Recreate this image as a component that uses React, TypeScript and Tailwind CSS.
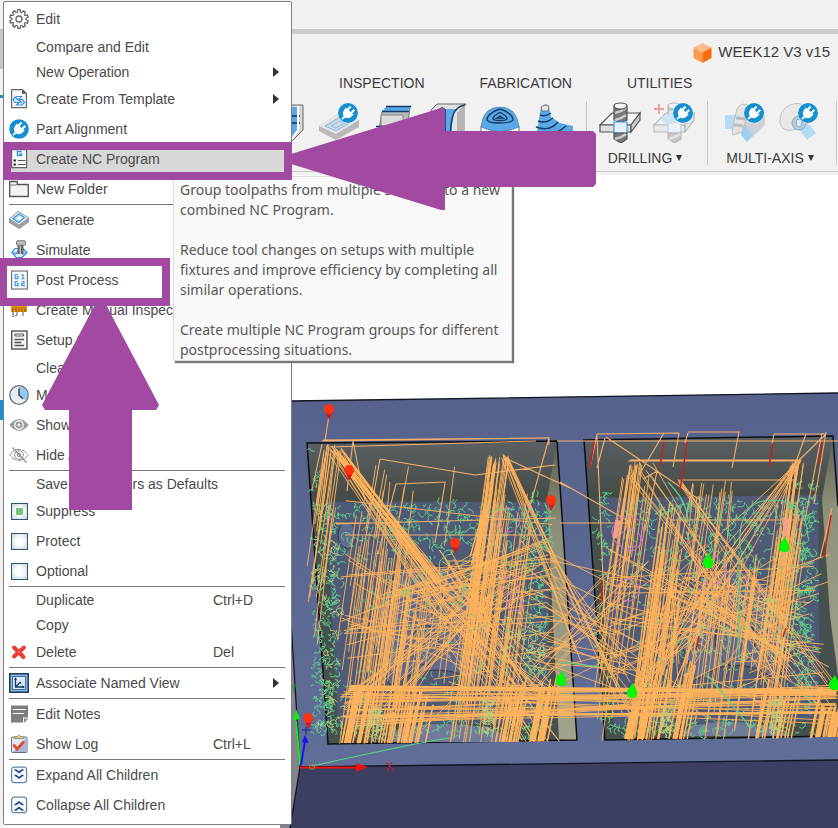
import type { ReactNode } from 'react';

type MenuEntry = {
    label?: string;
    icon?: ReactNode;
    shortcut?: string;
    submenu?: boolean;
    checkbox?: boolean;
    checked?: boolean;
    active?: boolean;
    separator?: boolean;
};

/* ---------- menu icons (20 x 20) ---------- */

const Icon = ({ children }: { children: ReactNode }) => (
    <svg viewBox="0 0 20 20" className="w-5 h-5" aria-hidden="true">
        {children}
    </svg>
);

// white plug centred on the origin, cord to the lower left
const Plug = () => (
    <g transform="rotate(42)" fill="#fff">
        <path d="M-5.2-2.600h10.400v1.400q0 5.400-4.200 6.200v1.200h-2v-1.200q-4.200-.8-4.200-6.200z" />
        <path d="M-3.500-6.600h2.100v4.600h-2.100zM1.400-6.600h2.100v4.600h-2.100z" />
        <path d="M0 4q0 2.500-.5 4.600" fill="none" stroke="#fff" strokeWidth="1.800" />
    </g>
);

const gearTeeth = Array.from({ length: 10 }, (_, i) => i * 36);

const GearIcon = () => (
    <Icon>
        <g fill="#fff" stroke="#666" strokeWidth="1.3">
            {gearTeeth.map((a) => (
                <path key={a} d="M8.4 3.4L8.8 .7h2.4l.4 2.7" transform={`rotate(${a} 10 10)`} />
            ))}
            <circle cx="10" cy="10" r="6.6" stroke="none" />
            {gearTeeth.map((a) => (
                <path key={a} d="M11.6 3.4q1 .2 1.3.4" fill="none" transform={`rotate(${a} 10 10)`} />
            ))}
            <circle cx="10" cy="10" r="3" />
        </g>
    </Icon>
);

const TemplateIcon = () => (
    <Icon>
        <path d="M2.6.6h10.8l4 4v14H2.6z" fill="#f7f7f7" stroke="#666" strokeWidth="1.2" />
        <path d="M13 .6v4.2h4.4z" fill="#555" />
        <path d="M4 10.500l3-3h5.500l-2.500 3h3.500l2 3-2.500 2.500H7.500l2.500-2.500H6zM7 9l6 5" fill="#d5eafb" stroke="#2f8fe0" strokeWidth="1.100" />
    </Icon>
);

const PlugIcon = () => (
    <Icon>
        <circle cx="10" cy="10" r="9.800" fill="#1490d2" />
        <g transform="translate(10 10)">
            <Plug />
        </g>
    </Icon>
);

const NcIcon = () => (
    <Icon>
        <path d="M2.600.6h15v18h-15z" fill="#f7f7f7" stroke="#666" strokeWidth="1.200" />
        <path d="M12.500 2.500H8.500v4h4V5h-2" fill="none" stroke="#3f97dc" strokeWidth="1.600" />
        <path d="M4.500 11.500h2.500M4.500 15.500h2.500" stroke="#333" strokeWidth="2" />
        <path d="M9 11.500h7.500M9 15.500h7.500" stroke="#555" strokeWidth="1.200" />
    </Icon>
);

const FolderIcon = () => (
    <Icon>
        <path d="M.7 17.500v-15h7.600v3h11v12z" fill="#f3f3f3" stroke="#555" strokeWidth="1.300" />
        <path d="M.7 6h6.500l1-1.500" fill="none" stroke="#777" />
    </Icon>
);

const GenerateIcon = () => (
    <Icon>
        <path d="M.5 9L9 1.500l10.500 6.500v4L10 18.500.5 12.500z" fill="#9aa1a8" stroke="#777" strokeWidth=".7" />
        <path d="M.5 9L9 1.500l10.500 6.500L10 15z" fill="#e9edf1" stroke="#888" strokeWidth=".6" />
        <path d="M4 8.500L10 4l5.500 3.500-6 5z" fill="#b9dcf8" stroke="#3b8fdc" strokeWidth="1.100" />
        <path d="M6.500 7l3 .5L10.500 5l3 3-4 2.500z" fill="#eef7ff" />
    </Icon>
);

const SimulateIcon = () => (
    <Icon>
        <path d="M3 12.500L6 8.500h8l4 4-5 5H7z" fill="#dff0ff" stroke="#2f8fe0" strokeWidth="1.200" />
        <path d="M2.500 13h15M5 16l5-6 5 6" fill="none" stroke="#2f8fe0" />
        <path d="M8.500 5h6v9h-6z" fill="#666" />
        <path d="M10.500 5h1.500v9h-1.500z" fill="#bbb" />
        <rect x="7.500" y=".7" width="9" height="4.600" rx="1" fill="#b9b9b9" stroke="#666" strokeWidth=".8" />
    </Icon>
);

const PostIcon = () => (
    <Icon>
        <rect x="2.600" y="1" width="15.800" height="18" fill="#f8f8f8" stroke="#777" strokeWidth="1.200" />
        <g fill="none" stroke="#48a0e6" strokeWidth="1.300">
            <path d="M9 4.700H6.200v4H9v-2H7.800M12.500 4.700h1.500v4M12.500 8.700h3M9 11.700H6.200v4H9v-2H7.800M12.500 11.700h2.500v2h-2.500v2H16" />
        </g>
    </Icon>
);

const InspectIcon = () => (
    <Icon>
        <path d="M2 4h16v8H2z" fill="#e8920c" />
        <path d="M4 8v4M7 7v5M10 8v4M13 7v5M16 8v4" stroke="#8a5200" />
        <path d="M4 12v5M8 12v3l-2 1M14 12v4" stroke="#555" fill="none" />
    </Icon>
);

const SheetIcon = () => (
    <Icon>
        <rect x="2.700" y="1" width="15.300" height="18" fill="#f5f5f5" stroke="#555" strokeWidth="1.400" />
        <path d="M6 4h8.500v2H6z" fill="#fff" stroke="#555" />
        <path d="M5.500 9.500h9.500M5.500 12.500h7M5.500 15.500h9.500" stroke="#555" strokeWidth="1.300" />
    </Icon>
);

const ClockIcon = () => (
    <Icon>
        <circle cx="10" cy="10" r="9.300" fill="#e9eef3" stroke="#6b7075" strokeWidth="1.300" />
        <path d="M10 10V1.800a8.200 8.200 0 0 1 6.500 13.200z" fill="#8ccaf8" />
        <path d="M10 3.500V10l4 4" fill="none" stroke="#444" strokeWidth="1.500" />
    </Icon>
);

const EyeIcon = () => (
    <Icon>
        <path d="M.3 10Q10-2 19.700 10 10 21.500.3 10z" fill="#9b9b9b" />
        <circle cx="10" cy="10" r="4.200" fill="#9b9b9b" stroke="#f4f4f4" strokeWidth="1.500" />
        <circle cx="10" cy="10" r="1.600" fill="#eee" />
    </Icon>
);

const EyeOffIcon = () => (
    <Icon>
        <g fill="none" stroke="#8c8c8c">
            <path d="M.6 10Q10-1.500 19.400 10 10 21 .6 10z" strokeDasharray="6 1.200" />
            <circle cx="10" cy="10" r="4.300" />
            <circle cx="10" cy="10" r="1.800" />
            <path d="M3.500 2.500l14 15" strokeWidth="1.200" />
        </g>
    </Icon>
);

const DeleteIcon = () => (
    <Icon>
        <path d="M5 5.500l9.500 9.500M15 5.500L5 14.500" stroke="#f03a36" strokeWidth="4" strokeLinecap="round" />
        <path d="M10 8.500l1.500 1.500-1.500 1.500L8.500 10z" fill="#f97a70" />
    </Icon>
);

const NamedViewIcon = () => (
    <Icon>
        <rect x=".8" y=".8" width="18.400" height="18.400" fill="#8eb8dc" stroke="#1f3f66" strokeWidth="1.600" />
        <rect x="3.500" y="3.500" width="13" height="13" fill="#d8e9f7" stroke="#3e6f9f" />
        <path d="M6.500 5v9h8.500M6.500 14l4.500-4.500 1 1" fill="none" stroke="#143a66" strokeWidth="1.300" />
        <path d="M5 6.800l1.500-2.500L8 6.800zM13.500 12.500l2.500 1.500-2.500 1.500z" fill="#143a66" />
    </Icon>
);

const NotesIcon = () => (
    <Icon>
        <path d="M2 1.500h17v12h-5v5H2z" fill="#7d7d7d" />
        <path d="M15 19v-4.500h4.500z" fill="#8b8b8b" />
        <path d="M4 5.500h13M4 9.500h11" stroke="#fff" strokeWidth="1.200" />
    </Icon>
);

const LogIcon = () => (
    <Icon>
        <rect x="2.500" y="3" width="15.500" height="15.500" rx="1" fill="#dfe7f2" stroke="#5a6f94" />
        <path d="M17.500 4v14H4z" fill="#a9b9d6" />
        <path d="M5 4.500l1-2h2.500Q10-.5 11.800 2.500h2l1 2z" fill="#d8cf96" stroke="#8f8446" strokeWidth=".8" />
        <path d="M4.500 10.500l3.500 4.500 7-7.500" fill="none" stroke="#e2492d" strokeWidth="2.800" />
    </Icon>
);

const ChevronBoxIcon = ({ up }: { up?: boolean }) => (
    <Icon>
        <rect x="2.600" y="2.100" width="15" height="15.500" rx="2.500" fill="#f4f9ff" stroke="#6485a8" strokeWidth="1.200" />
        <g transform={up ? 'rotate(180 10 10)' : undefined} fill="none" stroke="#2c4780" strokeWidth="1.700">
            <path d="M5.500 5H7l3 2.500L13 5h1.500M5.500 10.500H7l3 2.500 3-2.500h1.500" />
        </g>
    </Icon>
);

const menu: MenuEntry[] = [
    { label: 'Edit', icon: <GearIcon /> },
    { label: 'Compare and Edit' },
    { label: 'New Operation', submenu: true },
    { label: 'Create From Template', icon: <TemplateIcon />, submenu: true },
    { label: 'Part Alignment', icon: <PlugIcon /> },
    { label: 'Create NC Program', icon: <NcIcon />, active: true },
    { label: 'New Folder', icon: <FolderIcon /> },
    { separator: true },
    { label: 'Generate', icon: <GenerateIcon /> },
    { label: 'Simulate', icon: <SimulateIcon /> },
    { label: 'Post Process', icon: <PostIcon /> },
    { label: 'Create Manual Inspection', icon: <InspectIcon /> },
    { label: 'Setup Sheet', icon: <SheetIcon /> },
    { label: 'Clear Toolpath' },
    { label: 'Machining Time', icon: <ClockIcon /> },
    { label: 'Show Toolpath', icon: <EyeIcon /> },
    { label: 'Hide All', icon: <EyeOffIcon /> },
    { separator: true },
    { label: 'Save Parameters as Defaults' },
    { label: 'Suppress', checkbox: true, checked: true },
    { label: 'Protect', checkbox: true },
    { label: 'Optional', checkbox: true },
    { separator: true },
    { label: 'Duplicate', shortcut: 'Ctrl+D' },
    { label: 'Copy' },
    { label: 'Delete', icon: <DeleteIcon />, shortcut: 'Del' },
    { separator: true },
    { label: 'Associate Named View', icon: <NamedViewIcon />, submenu: true },
    { separator: true },
    { label: 'Edit Notes', icon: <NotesIcon /> },
    { label: 'Show Log', icon: <LogIcon />, shortcut: 'Ctrl+L' },
    { separator: true },
    { label: 'Expand All Children', icon: <ChevronBoxIcon /> },
    { label: 'Collapse All Children', icon: <ChevronBoxIcon up /> },
];

function MenuRow({ item }: { item: MenuEntry }) {
    if (item.separator) return <hr className="ml-[5px] mr-[6px] border-0 h-px bg-[#777]" />;

    if (item.checkbox) {
        return (
            <label className="flex items-center h-[30px] pl-[5px] gap-[7px]">
                <span className="flex justify-center w-5">
                    <input
                        type="checkbox"
                        defaultChecked={item.checked}
                        className="appearance-none w-[17px] h-[17px] border border-[#2d5578] bg-[radial-gradient(circle,#ffffff_35%,#c6d2da)] checked:bg-[linear-gradient(#78c678,#78c678),radial-gradient(circle,#ffffff_35%,#c6d2da)] checked:bg-[length:7px_7px,100%_100%] checked:bg-center checked:bg-no-repeat"
                    />
                </span>
                {item.label}
            </label>
        );
    }

    return (
        <button
            type="button"
            role="menuitem"
            className={`flex items-center w-full pl-[5px] gap-[7px] text-left whitespace-nowrap ${item.icon ? 'h-[30px]' : 'h-[25px]'} ${item.active ? 'bg-[#d7d7d7]' : ''}`}
        >
            <span className="w-5 shrink-0">{item.icon}</span>
            <span>{item.label}</span>
            {item.shortcut && <span className="ml-auto w-[78px]">{item.shortcut}</span>}
            {item.submenu && (
                <svg viewBox="0 0 6 10" className="ml-auto mr-3 w-[6px] h-[10px]" aria-hidden="true">
                    <path d="M0 0l6 5-6 5z" fill="#333" />
                </svg>
            )}
        </button>
    );
}

/* ---------- toolbar icons (42 x 42) ---------- */

const ToolIcon = ({ label, children }: { label: string; children: ReactNode }) => (
    <button type="button" aria-label={label} className="w-[42px] h-[42px]">
        <svg viewBox="0 0 42 42" className="w-full h-full">
            {children}
        </svg>
    </button>
);

const PlugBadge = () => (
    <g transform="translate(30 12)">
        <circle r="10.500" fill="#fff" opacity=".7" />
        <circle r="10" fill="#1490d2" />
        <Plug />
    </g>
);

const PocketTool = () => (
    <ToolIcon label="Pocket">
        <path d="M4 4h35v25l-11 11H4z" fill="#d6d6d6" stroke="#666" />
        <path d="M6 6h29v22l-8 8H6z" fill="#5aa9e6" />
        <path d="M6 15h30M6 22h30" stroke="#0e2f55" strokeWidth="1.500" />
        <path d="M34 5v24l-6 9" fill="none" stroke="#fff" strokeWidth="2" />
    </ToolIcon>
);

const ProbeTool = () => (
    <ToolIcon label="Inspect surface">
        <path d="M1 25l22-14 18 8v7L18 39 1 30z" fill="#b9b9b9" />
        <path d="M1 25l22-14 18 8-23 14z" fill="#e4e6e8" />
        <path d="M7 25l15-9 11 5-15 9z" fill="#c5dbea" stroke="#92b4cc" />
        <path d="M13 25l9-5 5 2-9 5z" fill="none" stroke="#9dbccf" />
        <PlugBadge />
    </ToolIcon>
);

const FaceTool = () => (
    <ToolIcon label="Measure">
        <path d="M10 11l5-5h23l-3 23-9 5H6z" fill="#b8b8b8" stroke="#777" />
        <path d="M9 14h22v11H9z" fill="#dcdcdc" stroke="#888" />
        <path d="M10 10l5-5h25l-5 5z" fill="#5aa9e6" />
        <path d="M14 5.500h25M10 10.500h27M4 25.500h26M1 29h29" stroke="#153c66" strokeWidth="1.700" />
        <path d="M3 27h28v9H0z" fill="#5aa9e6" />
    </ToolIcon>
);

const SwarfTool = () => (
    <ToolIcon label="Surface">
        <path d="M5 9l6-6h29l-8 9v27H5z" fill="#e2e2e2" stroke="#666" />
        <path d="M31 12l8-8v25l-8 9z" fill="#b6b6b6" />
        <path d="M14 8h16q-4 6-5 30H9Q15 15 14 8z" fill="#5aa9e6" />
        <path d="M24 38q1-25 6-29 3-4 9-5M13 9q3-4 6 0v25" fill="none" stroke="#153c66" strokeWidth="1.600" />
    </ToolIcon>
);

const DomeTool = () => (
    <ToolIcon label="Additive dome">
        <path d="M1 25v5q19 13 38 0v-5z" fill="#fff" stroke="#666" />
        <path d="M1 26Q3 6 20 6t19 20q-19 9-38 0z" fill="#5aa9e6" stroke="#4179a8" strokeWidth=".6" />
        <path d="M7 18Q8 13 17 9q3-1.500 6 0 9 4 10 9 0 4-13 4T7 18zM13 17q2-3 5.500-5 1.500-1 3 0 3.500 2 5.500 5 1 2.500-7 2.500t-7-2.500zM17 17l3-2 3 2z" fill="none" stroke="#153c66" strokeWidth="1.400" />
    </ToolIcon>
);

const ConeTool = () => (
    <ToolIcon label="Additive part">
        <path d="M7 6l5-3 3 3 2 10 9 6 13 3v12H2z" fill="#5aa9e6" />
        <path d="M7 6l4-2 4 1-1 5H8z" fill="#e5e5e5" stroke="#777" />
        <path d="M6 14q5 2 11-2M4 20q8 3 15-3M2 26q14 5 22-5M2 32q18 4 30-7" fill="none" stroke="#153c66" strokeWidth="1.500" />
    </ToolIcon>
);

const Drill = () => (
    <g stroke="#555" strokeWidth="1.200">
        <path d="M1 24l12-12h28l-9 12z" fill="#f7f7f7" />
        <path d="M1 24h31v7H1z" fill="#dedede" />
        <path d="M32 24l9-12v7l-9 12z" fill="#c9c9c9" />
        <path d="M15 5v14q6.500 4 13 0V5z" fill="#777" />
        <path d="M16 12q6-1 11-5M16 19q6-1 11-5" fill="none" stroke="#ccc" strokeWidth="2.500" />
        <ellipse cx="21.500" cy="5" rx="6.500" ry="3" fill="#f3f3f3" />
        <path d="M15 21h13v11H15z" fill="#e2f1fc" stroke="#3b9be6" />
        <path d="M15 32h13v6l-6 4-7-4z" fill="#777" />
        <path d="M16 38q6-1 11-5" fill="none" stroke="#ccc" strokeWidth="2.500" />
    </g>
);

const DrillTool = () => (
    <ToolIcon label="Drill">
        <Drill />
    </ToolIcon>
);

const HoleTool = () => (
    <ToolIcon label="Hole recognition">
        <g opacity=".35">
            <Drill />
            <ellipse cx="18" cy="18" rx="10" ry="5" fill="#8cc7f2" />
        </g>
        <path d="M6 3v10M1 8h10" stroke="#ef9a9a" strokeWidth="1.800" />
        <PlugBadge />
    </ToolIcon>
);

const MultiAxisTool = () => (
    <ToolIcon label="Multi-axis contour">
        <path d="M1 14h14v14H1z" fill="#b5dcf5" />
        <path d="M14 28l12-15 15 2v9L23 41z" fill="#cfd2d4" />
        <path d="M21 24l8 10-6 7-6-7z" fill="#9fd0f2" />
        <path d="M13 8q4-7 10-4l3 3-8 24-9 3-1-5z" fill="#e3e3e3" stroke="#bbb" />
        <path d="M12 17l10 1M10 24l9 1" stroke="#bcbcbc" strokeWidth="3" />
        <PlugBadge />
    </ToolIcon>
);

const RotaryTool = () => (
    <ToolIcon label="Rotary">
        <path d="M2 22Q1 9 12 4q10-4 15 2l0 20-12 3Q4 31 2 22z" fill="#e8e8e8" stroke="#c2c2c2" />
        <path d="M15 20l10-4 13 16-9 7z" fill="#b5daf3" />
        <ellipse cx="21" cy="22" rx="7" ry="7" fill="#b3cbdc" stroke="#8fa9bb" />
        <ellipse cx="21" cy="22" rx="3" ry="4" fill="#dfe9f0" stroke="#8fa9bb" />
        <PlugBadge />
    </ToolIcon>
);

const tabs = ['INSPECTION', 'FABRICATION', 'UTILITIES'];

function Toolbar() {
    return (
        <header className="bg-[#f1f1f1] text-[#3c3c3c] overflow-hidden">
            <div className="h-[34px] border-b-[5px] border-[#cacaca]" />
            <div className="flex items-center justify-end gap-[6px] h-[37px] pr-2 text-[15px]">
                <svg viewBox="0 0 18 20" className="w-[19px] h-5" aria-hidden="true">
                    <path d="M9 0l9 4.500L9 9.500 0 4.500z" fill="#ffb98a" />
                    <path d="M0 4.500l9 5V20l-9-5z" fill="#ff9850" />
                    <path d="M18 4.500l-9 5V20l9-5z" fill="#fb6d0b" />
                </svg>
                <h1>WEEK12 V3 v15</h1>
            </div>
            <nav className="flex items-center h-[24px] pl-[339px] gap-[55px] text-sm">
                {tabs.map((tab) => (
                    <button key={tab} type="button">{tab}</button>
                ))}
            </nav>
            <div className="flex h-[77px] pt-[6px] pl-[264px] border-b border-[#c6c6c6] text-sm">
                <div className="flex gap-3 pr-[10px] shrink-0">
                    <PocketTool />
                    <ProbeTool />
                    <FaceTool />
                    <SwarfTool />
                    <DomeTool />
                    <ConeTool />
                </div>
                <ToolGroup label="DRILLING" className="px-3">
                    <DrillTool />
                    <HoleTool />
                </ToolGroup>
                <ToolGroup label="MULTI-AXIS" className="px-4">
                    <MultiAxisTool />
                    <RotaryTool />
                </ToolGroup>
                <div className="w-px h-16 bg-[#c9c9c9] shrink-0" />
            </div>
            <div className="h-[3px]" />
        </header>
    );
}

function ToolGroup({ label, className, children }: { label: string; className: string; children: ReactNode }) {
    return (
        <div className={`h-16 border-l border-[#c9c9c9] shrink-0 ${className}`}>
            <div className="flex gap-3">{children}</div>
            <button type="button" className="flex items-center justify-center gap-1 w-full h-[30px] pr-1 whitespace-nowrap">
                {label}
                <svg viewBox="0 0 6 6" className="w-[6px] h-[6px]" aria-hidden="true">
                    <path d="M0 0h6L3 6z" fill="#333" />
                </svg>
            </button>
        </div>
    );
}

/* ---------- toolpath scene ---------- */

let seed = 12;
const rnd = () => {
    seed = (seed * 16807) % 2147483647;
    return seed / 2147483647;
};
const spread = (v: number, s: number) => Math.round((v + (rnd() - 0.5) * s) * 10) / 10;

// n lines between two jittered end points: [x, y, spreadX, spreadY]
const bundle = (n: number, a: number[], b: number[]) => {
    let d = '';
    for (let i = 0; i < n; i++) {
        d += `M${spread(a[0], a[2])} ${spread(a[1], a[3])}L${spread(b[0], b[2])} ${spread(b[1], b[3])}`;
    }
    return d;
};

// near parallel strokes that lean to the left on their way down
const slant = (n: number, x: number, y: number, w: number, h: number, len: number) => {
    let d = '';
    for (let i = 0; i < n; i++) {
        const l = Math.round(len * (0.4 + rnd() * 0.6));
        d += `M${spread(x + w / 2, w)} ${spread(y + h / 2, h)}l${spread(-l * 0.14, 6)} ${l}`;
    }
    return d;
};

// parallel strokes that all end on the same base line
const hatch = (n: number, x: number, w: number, y: number, jitter: number, base: number) => {
    let d = '';
    for (let i = 0; i < n; i++) {
        const top = spread(y, jitter);
        const x0 = spread(x + w / 2, w);
        d += `M${x0} ${top}L${Math.round((x0 - (base - top) * 0.2) * 10) / 10} ${base}`;
    }
    return d;
};

const web = (n: number, x: number, y: number, w: number, h: number) => {
    let d = '';
    for (let i = 0; i < n; i++) {
        const x0 = spread(x + w / 2, w);
        const y0 = spread(y + h / 2, h);
        d += `M${x0} ${y0}l${spread(0, 150)} ${spread(0, 90)}`;
    }
    return d;
};

const curls = (n: number, x: number, y: number, w: number, h: number, r: number) => {
    let d = '';
    for (let i = 0; i < n; i++) {
        const k = Math.round(r * (0.4 + rnd() * 0.5) * 10) / 10;
        d += `M${spread(x + w / 2, w)} ${spread(y + h / 2, h)}a${k} ${k} 0 0 ${rnd() > 0.5 ? 1 : 0} ${spread(0, r * 2)} ${spread(0, r * 2)}l${spread(0, 5)} ${spread(0, 5)}`;
    }
    return d;
};

const rapids = [
    slant(14, 322, 444, 22, 10, 150),
    slant(16, 326, 500, 60, 80, 130),
    slant(30, 352, 530, 60, 70, 210),
    slant(22, 380, 560, 50, 60, 180),
    slant(26, 488, 455, 22, 10, 290),
    slant(32, 484, 480, 50, 90, 250),
    slant(22, 400, 560, 130, 60, 150),
    slant(9, 372, 465, 120, 30, 90),
    bundle(11, [333, 450, 10, 8], [450, 610, 40, 20]),
    bundle(8, [345, 460, 14, 10], [540, 742, 40, 4]),
    bundle(5, [505, 456, 8, 4], [578, 640, 20, 60]),
    bundle(5, [505, 456, 6, 4], [628, 712, 10, 10]),
    bundle(20, [490, 580, 70, 40], [380, 700, 80, 20]),
    bundle(18, [440, 570, 60, 40], [540, 690, 50, 30]),
    bundle(12, [390, 600, 30, 20], [520, 560, 60, 40]),
    web(60, 390, 560, 130, 130),
    bundle(14, [345, 600, 10, 200], [552, 600, 10, 220]),
    slant(12, 628, 462, 14, 4, 130),
    slant(16, 622, 466, 30, 40, 260),
    slant(30, 660, 500, 22, 60, 240),
    slant(14, 690, 480, 60, 20, 110),
    slant(30, 700, 540, 60, 60, 190),
    slant(16, 640, 580, 40, 40, 150),
    slant(32, 776, 500, 30, 60, 230),
    slant(16, 790, 462, 14, 6, 200),
    bundle(10, [799, 460, 6, 4], [690, 590, 100, 80]),
    bundle(8, [640, 470, 30, 20], [800, 690, 60, 40]),
    bundle(6, [680, 480, 4, 4], [830, 700, 14, 40]),
    bundle(24, [710, 580, 80, 50], [650, 700, 60, 20]),
    bundle(14, [680, 590, 40, 40], [790, 640, 30, 60]),
    web(60, 650, 560, 130, 130),
    bundle(14, [610, 620, 10, 160], [820, 620, 20, 160]),
    bundle(34, [535, 620, 30, 160], [635, 630, 40, 150]),
    bundle(26, [350, 705, 20, 44], [836, 702, 4, 44]),
].join('');

const dense = [
    hatch(30, 350, 24, 694, 14, 743),
    hatch(22, 374, 60, 700, 30, 743),
    hatch(24, 505, 55, 690, 30, 742),
    hatch(14, 538, 14, 706, 8, 741),
    hatch(26, 630, 20, 710, 8, 739),
    hatch(18, 650, 50, 680, 40, 739),
    hatch(26, 822, 22, 708, 8, 737),
    hatch(16, 765, 60, 690, 30, 738),
    bundle(8, [350, 688, 4, 5], [836, 692, 4, 5]),
    bundle(5, [345, 717, 6, 3], [836, 713, 4, 3]),
    bundle(6, [338, 452, 10, 10], [440, 585, 12, 10]),
    bundle(9, [487, 505, 4, 8], [474, 560, 8, 10]),
].join('');

const outline =
    'M329 415l-4 26M322 441L549 438v7M549 438l-25 90M322 444L312 490M328 444L317 500M330 447L536 441M557 441H838' +
    'M323 440L550 438M380 459L475 475l80-10M396 484l50-2M396 484l-18 70M445 483l-10 60M380 459l-20 110M353 441l-6 50M353 441l12 60M505 458l65 30' +
    'M597 434l82-1M597 434L590 468M597 436l8 190M605 438l-8 30M606 437L700 500M688 432h51l-7 36M774 434h52M774 434l-2 10M826 432L814 504M822 433L805 520' +
    'M679 433l-6 34M664 433l-25 42M688 433l-3 10M628 461h172M630 460h168M826 434L797 462M806 434l-25 70M680 480h115M693 483l-12 60' +
    'M643 479l14-8-12 60M670 520h130M832 508l-12 50M560 482l70 40M560 523h70M336 524l220-6M336 523h50M345 535h200';

const arcs = [
    curls(260, 314, 505, 22, 230, 5),
    curls(80, 325, 502, 225, 20, 5),
    curls(120, 335, 510, 200, 60, 8),
    curls(100, 528, 490, 20, 240, 6),
    curls(100, 340, 560, 200, 170, 7),
    curls(10, 313, 450, 8, 50, 6),
    curls(80, 597, 490, 16, 240, 6),
    curls(90, 640, 500, 165, 22, 6),
    curls(120, 625, 510, 180, 70, 8),
    curls(170, 798, 480, 16, 230, 6),
    curls(100, 625, 580, 180, 145, 7),
    curls(70, 340, 724, 200, 12, 6),
    curls(70, 610, 722, 200, 12, 6),
].join('');

// finishing moves that stay visible over the rapids
const arcsOver = [
    curls(70, 340, 505, 210, 50, 6),
    curls(50, 350, 560, 180, 130, 6),
    curls(40, 525, 500, 22, 180, 6),
    curls(70, 630, 500, 170, 60, 6),
    curls(50, 640, 560, 150, 130, 6),
    curls(50, 790, 500, 20, 180, 6),
    curls(30, 340, 700, 460, 36, 6),
].join('');

const pale = [
    curls(60, 371, 708, 10, 32, 5),
    curls(60, 484, 700, 10, 34, 5),
    curls(60, 662, 706, 10, 28, 5),
    curls(60, 770, 698, 10, 34, 5),
    curls(50, 500, 620, 40, 40, 7),
    curls(70, 318, 540, 24, 190, 6),
    curls(70, 690, 600, 110, 60, 8),
].join('');

const pins = [[329, 409], [349, 470], [551, 500], [455, 543], [308, 718]];
const drops = [[708, 561], [784, 545], [561, 679], [632, 691], [834, 683]];

function Viewport() {
    return (
        <svg viewBox="0 175 838 653" className="block w-full h-auto" role="img" aria-label="Toolpath preview">
            <defs>
                <linearGradient id="top" x1="0" y1="0" x2="0" y2="1">
                    <stop offset="0" stopColor="#56628c" />
                    <stop offset="1" stopColor="#61709a" />
                </linearGradient>
                <linearGradient id="back" x1="0" y1="0" x2="0" y2="1">
                    <stop offset="0" stopColor="#5b6064" />
                    <stop offset="1" stopColor="#444b46" />
                </linearGradient>
                <linearGradient id="wall" x1="0" y1="0" x2="0" y2="1">
                    <stop offset="0" stopColor="#5c5e50" />
                    <stop offset=".3" stopColor="#8f907a" />
                    <stop offset="1" stopColor="#a3a38c" />
                </linearGradient>
                <clipPath id="stock">
                    <path d="M280 390h558v348L328 744H280z" />
                </clipPath>
            </defs>

            {/* stock */}
            <path d="M280 401L838 393v370L300 767 280 828z" fill="url(#top)" />
            <path d="M280 620h12l8 147-9 61h-11z" fill="#85848d" />
            <path d="M300 767L838 760v68H290z" fill="#3c3e62" />
            <path d="M291 401L838 393M291 620l9 147L838 760M300 767l-10 61" fill="none" stroke="#111522" strokeWidth="1.300" />

            {/* pockets */}
            <path d="M307 443L557 441l20 299-249 4z" fill="#46504f" />
            <path d="M307 443L557 441l-8 59H313z" fill="url(#back)" />
            <path d="M325 502h222l4 222H338z" fill="#4f5a76" />
            <path d="M557 441l20 299-18 1-8-160-4-82z" fill="url(#wall)" />
            <path d="M307 443L557 441l20 299-249 4z" fill="none" stroke="#0c0f14" strokeWidth="1.500" />
            <path d="M584 440L833 436l5 70v230l-233 4z" fill="#46504f" />
            <path d="M584 440L833 436l-10 59-234 3z" fill="url(#back)" />
            <path d="M598 498l220-3 2 225-206 6z" fill="#4f5a76" />
            <path d="M833 436l5 70v170l-8-60-8-118z" fill="url(#wall)" />
            <path d="M838 506l-5-70-249 4 21 300 233-4" fill="none" stroke="#0c0f14" strokeWidth="1.500" />

            {/* bosses on the pocket floors */}
            <g fill="#5f6b90" stroke="#2f3a4c">
                <ellipse cx="347" cy="535" rx="9" ry="13" />
                <path d="M372 640q5-70 50-75t70 60l-12 60q-40-30-90 0zM680 640q10-75 50-72t60 62l-14 50q-40-30-80 0z" />
                <ellipse cx="425" cy="645" rx="14" ry="20" />
                <ellipse cx="735" cy="640" rx="20" ry="26" />
            </g>
            <path d="M400 728q40-8 90 0l30 14H385zM690 726q40-8 80 0l20 10H680z" fill="#707b9c" />

            <g fill="none" clipPath="url(#stock)">
                <path d={arcs} stroke="#5fd08a" />
                <path d={rapids} stroke="#ffb35c" strokeWidth=".9" />
                <path d={outline} stroke="#f5b06c" strokeWidth="1.100" />
                <path d={arcsOver} stroke="#62d184" strokeWidth=".9" />
                <g stroke="#d77bd0">
                    <circle cx="508" cy="520" r="12" strokeDasharray="9 4" />
                    <circle cx="510" cy="585" r="9" strokeDasharray="7 4" />
                    <circle cx="628" cy="532" r="16" strokeDasharray="12 3" />
                    <circle cx="630" cy="540" r="11" strokeDasharray="9 3" />
                    <circle cx="628" cy="590" r="11" strokeDasharray="9 3" />
                    <circle cx="712" cy="570" r="14" strokeDasharray="8 5" />
                    <circle cx="515" cy="604" r="7" />
                </g>
                <path d="M618 520l-3 18M786 518l-1 18" stroke="#f5a08c" strokeWidth="5" />
                <path d={dense} stroke="#ffb35c" strokeWidth="1.500" />
                <path d={pale} stroke="#bfd07e" strokeWidth=".9" />
                <path d="M560 662l40 5M668 482q20 20 20 40M706 673l45 55M739 560v100M740 548q-3-48 32-48t36 38" stroke="#5fd08a" strokeWidth="1.200" />
                <path d="M594 442l-4 26M664 442l-4 24M687 442l-7 48M773 443l-4 24M822 442l-3 22M831 515l-7 42M602 580v22M699 636l-3 14M786 628l-3 9" stroke="#c81e1e" strokeWidth="1.500" />
            </g>
            <path d="M312 766Q420 742 450 738" fill="none" stroke="#5fd08a" strokeWidth="1.200" />

            {pins.map(([x, y]) => (
                <g key={`${x}-${y}`}>
                    <path d={`M${x - 4} ${y + 1}h9l-5 10z`} fill="#e01212" />
                    <circle cx={x} cy={y} r="5" fill="#ff3212" />
                </g>
            ))}
            {drops.map(([x, y]) => (
                <path key={`${x}-${y}`} d={`M${x + 1} ${y - 8}l4 8q1 8-5 7-6 0-5-7z`} fill="#00f900" />
            ))}

            {/* axes */}
            <path d="M300 765l-4-44" stroke="#0bee18" strokeWidth="2" />
            <path d="M293 720l3-11 4 10z" fill="#0bee18" />
            <path d="M301 765l4-24" stroke="#1515ee" strokeWidth="2" />
            <path d="M302 742l3-7 4 8z" fill="#1515ee" />
            <path d="M302 730h9M306 727v8" stroke="#1b2590" />
            <path d="M300 767.500h58" stroke="#ee1111" strokeWidth="2" />
            <path d="M356 763l12 4-12 5z" fill="#ee1111" />
            <circle cx="312" cy="767" r="2.500" fill="none" stroke="#9a9a45" />
            <text x="385" y="771" fontFamily="Liberation Sans, sans-serif" fontSize="13" fill="#b01c2c">X</text>
            <text x="290" y="692" fontFamily="Liberation Sans, sans-serif" fontSize="11" fill="#159a2a">Y</text>
        </svg>
    );
}

export default function App() {
    return (
        <div className="relative min-h-screen overflow-hidden bg-white font-['Liberation_Sans',sans-serif]">
            <Toolbar />
            <main>
                <Viewport />
            </main>

            {/* slice of the browser panel beside the menu */}
            <div className="absolute inset-y-0 left-0 w-1 bg-[#f1f1f1]" aria-hidden="true">
                <div className="mt-[29px] h-10 bg-[#c6c6c6]" />
                <div className="mt-[26px] h-[3px] bg-[#1490d2]" />
                <div className="mt-[302px] h-5 bg-[#1490d2]" />
            </div>

            <div
                role="menu"
                className="absolute left-[3px] top-px w-[289px] pt-[2px] pb-1 bg-white border border-[#808080] rounded-[2px] text-sm text-[#4a4a4a]"
            >
                {menu.map((item, i) => (
                    <MenuRow key={i} item={item} />
                ))}
            </div>

            <div
                role="tooltip"
                className="absolute left-[173px] top-[176px] w-[339px] px-[6px] pt-[3px] bg-[#f9f9f9] border border-[#dcdcdc] shadow-[2px_2px_1px_#777] text-[#575757] text-sm leading-5 whitespace-nowrap font-['Noto_Sans',sans-serif]"
            >
                <p className="mb-5">Group toolpaths from multiple setups into a new<br />combined NC Program.</p>
                <p className="mb-5">Reduce tool changes on setups with multiple<br />fixtures and improve efficiency by completing all<br />similar operations.</p>
                <p>Create multiple NC Program groups for different<br />postprocessing situations.</p>
            </div>

            {/* callouts */}
            <div className="absolute left-[3px] top-[142px] w-[289px] h-[38px] border-8 border-[#a249a2] pointer-events-none" />
            <div className="absolute left-[-1px] top-[258px] w-[171px] h-[48px] border-8 border-[#a249a2] pointer-events-none" />
            <svg viewBox="0 0 306 104" className="absolute left-[291px] top-[107px] w-[306px] h-[104px] pointer-events-none" aria-hidden="true">
                <path d="M0 47L150 1h4v23h148l3 3v50l-3 3H154v23h-4L0 57z" fill="#a249a2" />
            </svg>
            <svg viewBox="0 0 118 212" className="absolute left-[42px] top-[299px] w-[118px] h-[212px] pointer-events-none" aria-hidden="true">
                <path d="M56 0h5L117 106l-3 5H90v100H27V111H3l-3-5z" fill="#a249a2" />
            </svg>
        </div>
    );
}
